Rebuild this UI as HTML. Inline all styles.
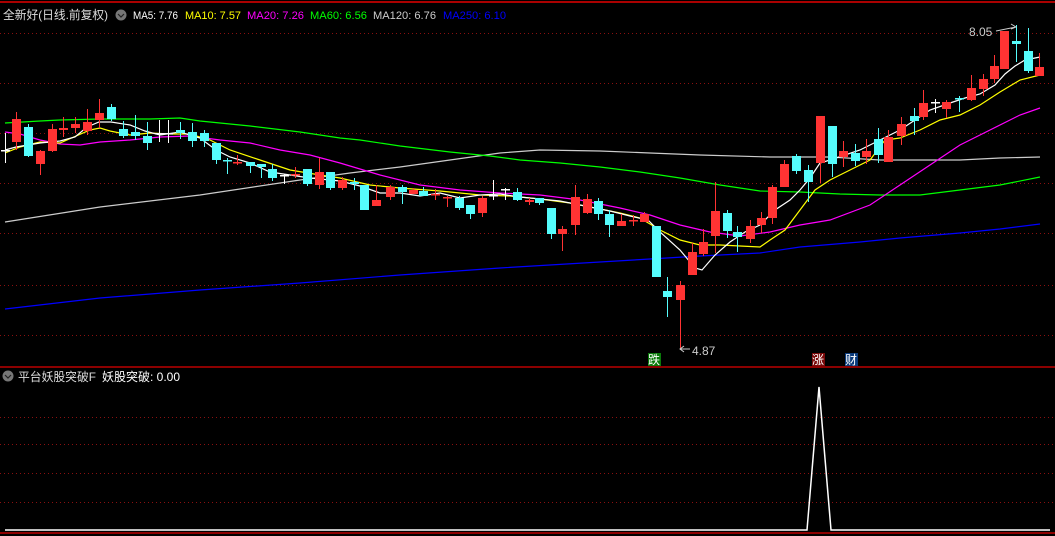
<!DOCTYPE html>
<html><head><meta charset="utf-8"><style>
html,body{margin:0;padding:0;background:#000;width:1055px;height:536px;overflow:hidden}
svg{display:block}
text{font-family:"Liberation Sans","Noto Sans CJK SC",sans-serif;font-size:12px}
.h{font-size:11px}
</style></head><body>
<svg id="s" width="1055" height="536" xmlns="http://www.w3.org/2000/svg">
<rect width="1055" height="536" fill="#000"/>
<line x1="0" y1="2" x2="1055" y2="2" stroke="#a00" stroke-width="2"/>
<g id="grid" stroke="#8a1010" stroke-width="1" stroke-dasharray="1,3"></g>
<line x1="0" y1="367" x2="1055" y2="367" stroke="#b00" stroke-width="1.5"/>
<line x1="0" y1="533" x2="1055" y2="533" stroke="#b00" stroke-width="1.5"/>
<g id="ma" fill="none" stroke-width="1.2"></g>
<g id="c"></g>
<text x="3" y="19" fill="#ddd" textLength="105" lengthAdjust="spacingAndGlyphs">全新好(日线.前复权)</text>
<circle cx="121" cy="15" r="5.5" fill="#777"/>
<path d="M118 14 L121 17 L124 14" stroke="#222" fill="none" stroke-width="1.2"/>
<text class="h" x="133" y="19" fill="#fff" textLength="45" lengthAdjust="spacingAndGlyphs">MA5: 7.76</text>
<text class="h" x="185" y="19" fill="#ff0" textLength="56" lengthAdjust="spacingAndGlyphs">MA10: 7.57</text>
<text class="h" x="247" y="19" fill="#f0f" textLength="57" lengthAdjust="spacingAndGlyphs">MA20: 7.26</text>
<text class="h" x="310" y="19" fill="#0f0" textLength="57" lengthAdjust="spacingAndGlyphs">MA60: 6.56</text>
<text class="h" x="373" y="19" fill="#ccc" textLength="63" lengthAdjust="spacingAndGlyphs">MA120: 6.76</text>
<text class="h" x="443" y="19" fill="#00f" textLength="63" lengthAdjust="spacingAndGlyphs">MA250: 6.10</text>
<text x="969" y="36" fill="#ccc">8.05</text>
<path d="M996 31 L1016 27 M1011 24 L1016 27 L1011 29" stroke="#ccc" fill="none"/>
<text x="692" y="355" fill="#ccc">4.87</text>
<path d="M680 349 L690 349 M684 346 L680 349 L684 352" stroke="#ccc" fill="none"/>
<rect x="648" y="353" width="13" height="13" fill="#0a7a0a"/>
<text x="648" y="364" fill="#fff">跌</text>
<rect x="812" y="353" width="13" height="13" fill="#7a0a0a"/>
<text x="812" y="364" fill="#fff">涨</text>
<rect x="845" y="353" width="13" height="13" fill="#0a3a7a"/>
<text x="845" y="364" fill="#fff">财</text>
<circle cx="8" cy="376" r="5.5" fill="#777"/>
<path d="M5 375 L8 378 L11 375" stroke="#222" fill="none" stroke-width="1.2"/>
<text x="18" y="381" fill="#ddd" textLength="78" lengthAdjust="spacingAndGlyphs">平台妖股突破F</text>
<text x="102" y="381" fill="#fff" textLength="78" lengthAdjust="spacingAndGlyphs">妖股突破: 0.00</text>
<polyline points="5,530 807,530 819,387 831,530 1050,530" fill="none" stroke="#fff" stroke-width="1.5"/>
</svg>
<script>
var NS="http://www.w3.org/2000/svg",g=document.getElementById('grid'),m=document.getElementById('ma'),c=document.getElementById('c');
function el(p,t,a){var e=document.createElementNS(NS,t);for(var k in a)e.setAttribute(k,a[k]);p.appendChild(e);}
[33,83,133,183,233,285,335,417,444,473,502].forEach(function(y){el(g,'line',{x1:0,y1:y+.5,x2:1055,y2:y+.5});});
var mas=[
['#ccc','5,222 100,207 200,195 300,180 350,173 400,167 450,160 500,153 540,150 600,151 650,153 700,155 770,157 830,157 880,160 920,160 960,160 1000,158 1040,157'],
['#00f','5,309 100,298 200,290 300,283 400,275 500,268 600,262 650,259 700,256 760,253 800,247 860,242 900,238 960,233 1000,229 1040,224'],
['#0f0','5,123 40,121 60,120 100,119 150,119 180,118 200,121 250,126 300,132 340,138 360,140 400,146 450,152 490,156 520,160 560,163 600,167 640,172 680,178 720,185 760,191 800,192 840,194 880,195 920,195 960,190 1000,185 1040,177'],
['#f0f','5,132 20,134 40,140 60,144 80,145 100,142 130,140 160,137 190,136 220,140 250,143 280,150 310,155 340,163 380,175 420,185 460,190 500,193 540,195 580,200 620,208 650,215 680,225 710,232 740,236 770,232 800,225 830,220 870,205 900,185 930,165 960,145 990,130 1020,115 1040,108'],
['#ff0','5,153 20,147 40,142 60,143 90,130 100,128 110,131 130,135 150,133 170,134 190,134 210,140 230,150 260,160 290,170 320,175 340,178 370,185 400,188 440,191 480,195 510,196 540,199 570,203 600,209 620,213 640,218 660,230 680,240 700,245 720,245 740,246 760,247 770,240 785,230 800,210 815,190 830,180 850,170 870,160 885,140 900,138 920,130 940,120 960,115 980,105 1000,92 1020,80 1040,75'],
['#fff','5,150 16,147 40,143 60,141 75,137 87,127 99,122 111,122 130,125 145,131 160,135 180,132 200,138 216,150 230,157 250,163 270,172 290,175 310,178 330,180 340,181 360,186 380,193 400,193 420,196 440,193 460,198 480,195 500,194 520,197 540,199 560,201 575,204 590,207 610,211 630,216 648,220 660,232 680,250 695,268 702,270 715,255 730,242 745,232 760,225 775,210 790,200 800,190 810,178 820,163 830,160 845,155 860,150 880,140 900,130 915,120 930,110 950,103 965,98 980,94 995,85 1005,74 1015,66 1025,60 1040,57']];
mas.forEach(function(a){el(m,'polyline',{points:a[1],stroke:a[0]});});
var d=[[5,150,150,133,163,'w'],[16,119,142,112,150,'r'],[28,127,156,124,157,'c'],[40,151,164,150,175,'r'],[52,129,151,124,152,'r'],[63,128,130,117,137,'r'],[75,124,128,117,133,'r'],[87,122,131,109,135,'r'],[99,113,120,99,128,'r'],[111,107,119,104,121,'c'],[123,129,136,121,138,'c'],[135,132,136,115,140,'c'],[147,136,143,122,150,'c'],[159,133,133,120,142,'w'],[168,133,133,120,143,'w'],[180,130,133,122,139,'c'],[192,132,141,123,147,'c'],[204,133,141,130,147,'c'],[216,143,160,143,164,'c'],[227,160,160,158,174,'c'],[237,162,162,155,165,'r'],[250,162,166,162,173,'c'],[261,164,167,164,178,'c'],[272,169,178,164,181,'c'],[284,175,175,174,184,'w'],[295,174,174,167,178,'r'],[307,169,184,169,186,'c'],[319,172,185,158,189,'r'],[330,172,188,172,190,'c'],[342,180,188,177,190,'r'],[354,182,184,178,190,'c'],[364,185,210,185,210,'c'],[376,200,206,185,206,'r'],[390,187,197,185,200,'r'],[402,187,192,185,204,'c'],[413,190,194,188,194,'r'],[423,191,196,187,196,'c'],[435,194,195,189,200,'r'],[447,197,197,196,207,'r'],[459,198,208,196,210,'c'],[470,205,214,205,219,'c'],[482,198,213,196,217,'r'],[493,195,195,180,200,'w'],[505,189,189,188,200,'w'],[517,192,200,188,201,'c'],[529,200,202,198,205,'r'],[539,198,203,198,205,'c'],[551,208,234,208,239,'c'],[562,229,234,226,251,'r'],[575,197,225,185,235,'r'],[587,199,213,194,214,'r'],[598,201,214,198,220,'c'],[609,214,225,210,237,'c'],[621,221,226,214,226,'r'],[633,220,220,215,226,'r'],[644,214,222,212,222,'r'],[656,226,277,226,277,'c'],[667,291,297,277,317,'c'],[680,285,300,281,350,'r'],[692,252,275,243,275,'r'],[703,242,254,229,256,'r'],[715,211,236,182,253,'r'],[727,213,231,210,238,'c'],[737,232,237,226,252,'c'],[750,226,239,220,243,'r'],[761,218,225,212,233,'r'],[772,187,218,185,224,'r'],[784,164,187,160,187,'r'],[796,156,171,154,174,'c'],[808,170,182,165,202,'c'],[820,116,163,116,183,'r'],[832,126,164,126,177,'c'],[843,151,157,141,167,'r'],[855,153,161,144,166,'c'],[866,151,157,139,164,'r'],[878,139,155,128,163,'c'],[888,137,162,130,162,'r'],[901,124,136,117,145,'r'],[914,116,121,108,135,'c'],[923,103,117,90,120,'r'],[935,102,102,99,113,'w'],[946,102,109,100,118,'r'],[959,98,98,96,112,'c'],[971,88,100,75,101,'r'],[983,79,89,74,96,'r'],[994,66,79,55,83,'r'],[1004,31,69,31,69,'r'],[1016,41,44,25,62,'c'],[1028,51,71,28,73,'c'],[1039,67,76,53,76,'r']];
d.forEach(function(k){var col=k[5]=='r'?'#ff3333':k[5]=='c'?'#55fcfc':'#fff';
el(c,'line',{x1:k[0]+.5,y1:k[3],x2:k[0]+.5,y2:k[4],stroke:col,'stroke-width':1});
var h=k[2]-k[1];if(h<2)el(c,'rect',{x:k[0]-4,y:k[1],width:9,height:1.5,fill:col});else el(c,'rect',{x:k[0]-4,y:k[1],width:9,height:h,fill:col});});
</script>
</body></html>
